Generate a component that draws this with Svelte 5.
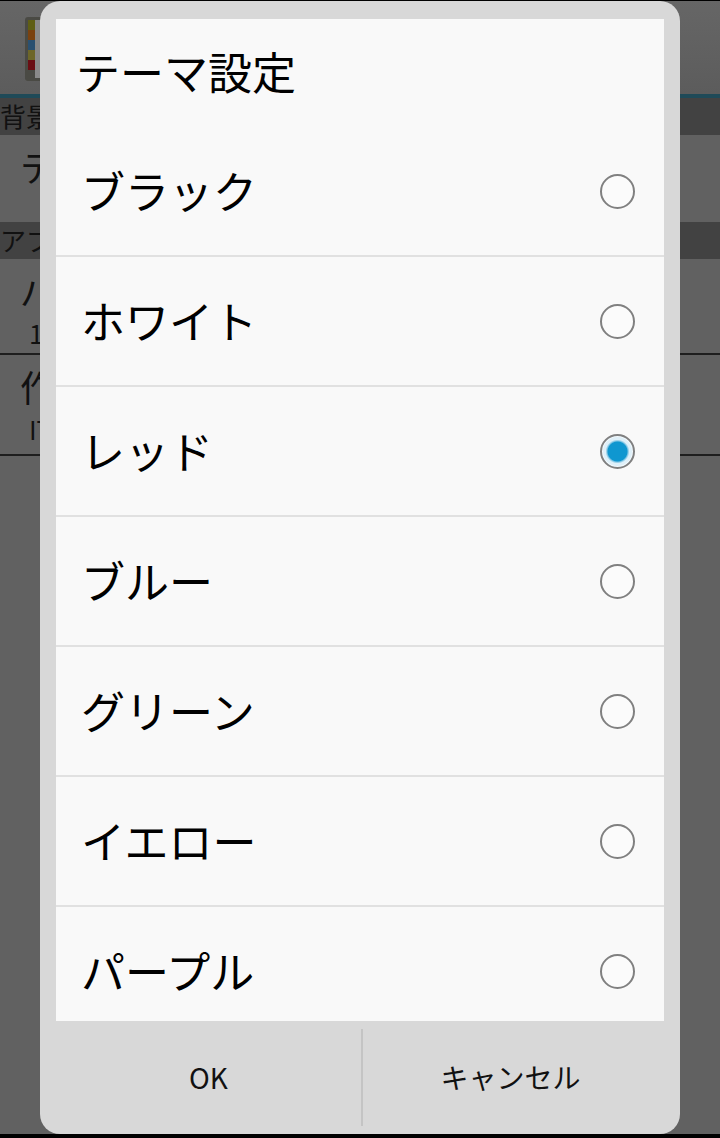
<script lang="ts">
  const themes = ['ブラック', 'ホワイト', 'レッド', 'ブルー', 'グリーン', 'イエロー', 'パープル'];
  const tabs = ['#5f5e14', '#7a4210', '#2a5070', '#6d6628', '#6a0e14'];
  let selected = $state('レッド');
</script>

<div class="screen">
  <!-- settings page, dimmed behind the dialog -->
  <div class="page">
    <header class="appbar">
      <div class="book">
        <div class="tabs">
          {#each tabs as tab}
            <span style="background: {tab}"></span>
          {/each}
        </div>
        <div class="sheet"></div>
      </div>
    </header>
    <div class="section first">背景</div>
    <div class="item theme"><div class="name">テーマ</div></div>
    <div class="section">アプリ</div>
    <div class="item"><div class="name">バージョン</div><div class="value">1.0</div></div>
    <div class="item"><div class="name">作者</div><div class="value">IT</div></div>
  </div>

  <div class="dialog">
    <div class="body">
      <h1>テーマ設定</h1>
      <div class="list">
        {#each themes as theme}
          <button class="row" onclick={() => (selected = theme)}>
            <span class="label">{theme}</span>
            <span class="radio" class:on={selected === theme}></span>
          </button>
        {/each}
      </div>
    </div>
    <div class="actions">
      <button class="action">OK</button>
      <button class="action">キャンセル</button>
    </div>
  </div>
</div>

<style>
  :global(body) {
    margin: 0;
    background: #000;
  }

  .screen {
    position: relative;
    width: 720px;
    height: 1138px;
    overflow: hidden;
    background: #000;
    font-family: "Noto Sans CJK JP", "Noto Sans", sans-serif;
    color: #000;
  }

  .page {
    margin-top: 1px;
    height: 1133px;
    background: #616161;
    color: #111;
  }

  .appbar {
    box-sizing: border-box;
    height: 97px;
    padding: 16px 0 0 25px;
    background: linear-gradient(#666, #5c5c5c);
    border-bottom: 4px solid #1f4a58;
  }

  .book {
    display: flex;
    width: 40px;
    height: 64px;
    box-sizing: border-box;
    padding: 3px 0 3px 3px;
    background: #4a4a44;
    border-radius: 3px;
  }

  .tabs {
    display: flex;
    flex-direction: column;
    width: 7px;
    margin-bottom: 8px;
  }

  .tabs span {
    flex: 1;
  }

  .sheet {
    flex: 1;
    background: #8a8a8a;
  }

  .section {
    box-sizing: border-box;
    height: 37px;
    background: #424242;
    font-size: 26px;
    line-height: 36px;
  }

  .item {
    box-sizing: border-box;
    height: 96px;
    padding: 6px 0 0 20px;
    border-bottom: 2px solid #1e1e1e;
  }

  .item.theme {
    height: 87px;
    border-bottom: none;
  }

  .item + .item {
    height: 101px;
    padding-top: 6px;
  }

  .name {
    font-size: 36px;
    line-height: 50px;
  }

  .value {
    padding-left: 9px;
    font-size: 26px;
    line-height: 36px;
  }

  .dialog {
    position: absolute;
    left: 40px;
    top: 1px;
    display: flex;
    flex-direction: column;
    width: 640px;
    height: 1133px;
    box-sizing: border-box;
    padding-top: 18px;
    background: #d8d8d8;
    border-radius: 20px;
  }

  .body {
    height: 1002px;
    margin: 0 16px;
    overflow: hidden;
    background: #f9f9f9;
  }

  h1 {
    height: 108px;
    margin: 0;
    padding: 25px 0 0 20px;
    box-sizing: border-box;
    font-size: 44px;
    font-weight: 400;
    line-height: 54px;
    white-space: nowrap;
  }

  .row {
    display: flex;
    align-items: center;
    justify-content: space-between;
    width: 100%;
    height: 130px;
    box-sizing: border-box;
    padding: 0 29px 0 25px;
    background: none;
    border: none;
    border-bottom: 2px solid #e1e1e1;
    font: inherit;
    color: inherit;
  }

  .label {
    margin-top: -2px;
    font-size: 44px;
    line-height: 60px;
  }

  .radio {
    width: 35px;
    height: 35px;
    box-sizing: border-box;
    border: 2px solid #808080;
    border-radius: 50%;
    background: #fbfbfb;
  }

  .radio.on {
    background: radial-gradient(circle, #0f97d0 0 9.5px, #7cc4e3 10.5px, #dff0f9 12px);
    box-shadow: inset 0 0 0 1px #f4f9fc;
  }

  .actions {
    display: flex;
    flex: 1;
    align-items: center;
    padding: 0 16px 1px;
  }

  .action {
    flex: 0 0 305px;
    height: 97px;
    background: none;
    border: none;
    font: inherit;
    font-size: 28px;
    color: #111;
    padding: 0;
  }

  .action + .action {
    flex: 1;
    padding-right: 6px;
    border-left: 2px solid #c4c4c4;
  }
</style>
